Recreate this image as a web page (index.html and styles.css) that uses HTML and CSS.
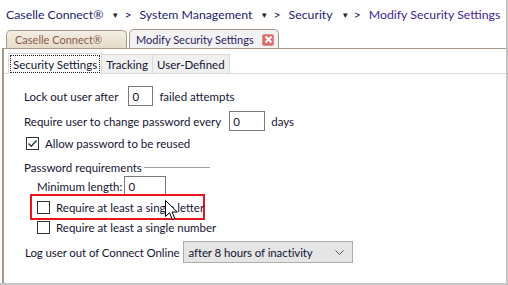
FILE: index.html
```html
<!DOCTYPE html>
<html lang="en">
<head>
    <meta charset="UTF-8">
    <title>Modify Security Settings</title>
    <link rel="stylesheet" href="styles.css">
</head>
<body>
    <div class="window">
        <div class="breadcrumb">
            <span class="crumb">Caselle Connect®</span>
            <span class="caret">▾</span><span class="sep">&gt;</span>
            <span class="crumb">System Management</span>
            <span class="caret">▾</span><span class="sep">&gt;</span>
            <span class="crumb">Security</span>
            <span class="caret">▾</span><span class="sep">&gt;</span>
            <span class="crumb current">Modify Security Settings</span>
        </div>

        <div class="doc-tabs">
            <div class="doc-tab">Caselle Connect®</div>
            <div class="doc-tab active">
                Modify Security Settings
                <span class="close-btn">
                    <svg width="9" height="9" viewBox="0 0 9 9"><path d="M1.5 1.5 L7.5 7.5 M7.5 1.5 L1.5 7.5" stroke="#fff" stroke-width="2"/></svg>
                </span>
            </div>
        </div>

        <div class="doc-panel">
            <div class="inner-tabs">
                <div class="inner-tab selected"><span class="focus">Security Settings</span></div>
                <div class="inner-tab">Tracking</div>
                <div class="inner-tab">User-Defined</div>
            </div>

            <div class="settings">
                <div class="row row-lock">
                    <span>Lock out user after</span>
                    <span class="field w-lock">0</span>
                    <span>failed attempts</span>
                </div>
                <div class="row row-change">
                    <span>Require user to change password every</span>
                    <span class="field w-days">0</span>
                    <span>days</span>
                </div>
                <div class="row row-check">
                    <span class="checkbox checked">
                        <svg width="11" height="11" viewBox="0 0 11 11"><path d="M1.5 5.5 L4.2 8.2 L9.5 2.5" fill="none" stroke="#333" stroke-width="1.4"/></svg>
                    </span>
                    <span>Allow password to be reused</span>
                </div>
                <div class="group-title">
                    <span>Password requirements</span>
                    <span class="group-line"></span>
                </div>
                <div class="group">
                    <div class="row row-min">
                        <span>Minimum length:</span>
                        <span class="field w-min">0</span>
                    </div>
                    <div class="highlight">
                        <div class="row row-sub">
                            <span class="checkbox"></span>
                            <span>Require at least a single letter</span>
                        </div>
                    </div>
                    <div class="row row-sub">
                        <span class="checkbox"></span>
                        <span>Require at least a single number</span>
                    </div>
                </div>
                <div class="row row-logout">
                    <span>Log user out of Connect Online</span>
                    <span class="select">
                        after 8 hours of inactivity
                        <svg class="chevron" width="9" height="6" viewBox="0 0 9 6"><path d="M0.5 0.5 L4.5 4.5 L8.5 0.5" fill="none" stroke="#555" stroke-width="1"/></svg>
                    </span>
                </div>
            </div>

            <svg class="cursor" width="14" height="22" viewBox="0 0 14 22">
                <path d="M0.5 0.5 L0.5 16.5 L4.5 12.8 L7.3 19.5 L9.8 18.4 L7.1 12 L12.3 12 Z" fill="#fff" stroke="#000" stroke-width="1"/>
            </svg>
        </div>
    </div>
</body>
</html>
```

FILE: styles.css
```css
* {
    box-sizing: border-box;
}

body {
    margin: 0;
    background-color: #ffffff;
    font-family: Lato, "Open Sans", sans-serif;
    font-size: 11.5px;
    color: #141432;
}

.window {
    width: 508px;
    height: 285px;
    border-right: 2px solid #c4c4c4;
    border-bottom: 2px solid #c4c4c4;
    display: flex;
    flex-direction: column;
    overflow: hidden;
}

/* breadcrumb bar */
.breadcrumb {
    height: 28px;
    padding-left: 6px;
    display: flex;
    align-items: center;
    font-size: 12.3px;
    color: #1c1c70;
    white-space: nowrap;
}

.caret {
    font-size: 9px;
    margin-left: 10px;
    color: #222;
}

.sep {
    margin-left: 6px;
    margin-right: 8px;
}

.crumb.current {
    color: #3e1e96;
}

/* document tabs */
.doc-tabs {
    height: 20px;
    padding-left: 6px;
    display: flex;
    align-items: flex-end;
    gap: 2px;
}

.doc-tab {
    height: 18px;
    width: 121px;
    flex-shrink: 0;
    padding-left: 8px;
    display: flex;
    align-items: center;
    white-space: nowrap;
    border: 1px solid #a8988a;
    border-bottom: none;
    border-radius: 5px 5px 0 0;
    background: linear-gradient(#f4eee4, #e6dbc8);
    color: #8a5a4e;
    font-size: 11px;
}

.doc-tab.active {
    height: 20px;
    width: 150px;
    background: #f2f2f2;
    color: #2a1a60;
    position: relative;
    top: 1px;
    padding-left: 6px;
}

.close-btn {
    width: 12px;
    height: 12px;
    margin-left: auto;
    margin-right: 4px;
    background-color: #e46a6a;
    border: 1px solid #d09090;
    border-radius: 2px;
    display: flex;
    align-items: center;
    justify-content: center;
}

.close-btn svg {
    display: block;
}

.doc-panel {
    flex: 1;
    margin-left: 2px;
    border-top: 1px solid #a8988a;
    border-left: 2px solid #a8988a;
    position: relative;
}

/* inner tabs */
.inner-tabs {
    margin-top: 3px;
    padding-left: 4px;
    height: 22px;
    display: flex;
    align-items: flex-end;
    border-bottom: 1px solid #d9d9d9;
}

.inner-tab {
    height: 19px;
    padding: 0 4px;
    display: flex;
    align-items: center;
    background-color: #f0f0f0;
    border: 1px solid #d9d9d9;
    border-bottom: none;
    border-left: none;
}

.inner-tab.selected {
    height: 21px;
    background-color: #ffffff;
    border-left: 1px solid #d9d9d9;
    padding: 1px;
    margin-bottom: -1px;
}

.focus {
    border: 1px dotted #222;
    padding: 0 2px;
    height: 18px;
    display: flex;
    align-items: center;
}

/* settings form */
.settings {
    padding-left: 20px;
    padding-top: 12px;
    display: flex;
    flex-direction: column;
}

.row {
    display: flex;
    align-items: center;
    white-space: nowrap;
}

.row-lock {
    height: 20px;
    gap: 6px;
}

.row-change {
    height: 20px;
    margin-top: 5px;
    gap: 6px;
}

.field {
    height: 20px;
    border: 1px solid #7a7a7a;
    padding-left: 3px;
    display: flex;
    align-items: center;
    background: #fff;
}

.w-lock {
    width: 25px;
    margin-left: 4px;
}

.w-days {
    width: 36px;
    margin-left: 2px;
}

.w-min {
    width: 42px;
    margin-left: 2px;
}

.checkbox {
    width: 13px;
    height: 13px;
    border: 1px solid #333;
    background: #fff;
    display: flex;
    align-items: center;
    justify-content: center;
    margin-right: 6px;
}

.checkbox svg {
    display: block;
}

.row-check {
    height: 13px;
    margin-top: 6px;
    padding-left: 2px;
}

.group-title {
    margin-top: 9px;
    height: 16px;
    display: flex;
    align-items: center;
}

.group-line {
    width: 66px;
    height: 1px;
    background-color: #a0a0a0;
    margin-left: 2px;
}

.group {
    padding-left: 6px;
    display: flex;
    flex-direction: column;
}

.row-min {
    height: 20px;
    margin-top: 1px;
    padding-left: 7px;
}

.highlight {
    width: 175px;
    height: 26px;
    border: 2px solid #e8141e;
    margin-top: -2px;
    display: flex;
    align-items: center;
    padding-left: 5px;
}

.row-sub {
    height: 13px;
}

.group > .row-sub {
    margin-top: 1px;
    padding-left: 7px;
}

.row-logout {
    height: 22px;
    margin-top: 7px;
    padding-left: 1px;
    letter-spacing: -0.1px;
}

.select {
    width: 170px;
    height: 22px;
    margin-left: 4px;
    border: 1px solid #adadad;
    background-color: #e5e5e5;
    display: flex;
    align-items: center;
    padding-left: 4px;
    position: relative;
}

.chevron {
    position: absolute;
    right: 8px;
    top: 8px;
}

.cursor {
    position: absolute;
    left: 161px;
    top: 151px;
}
```
